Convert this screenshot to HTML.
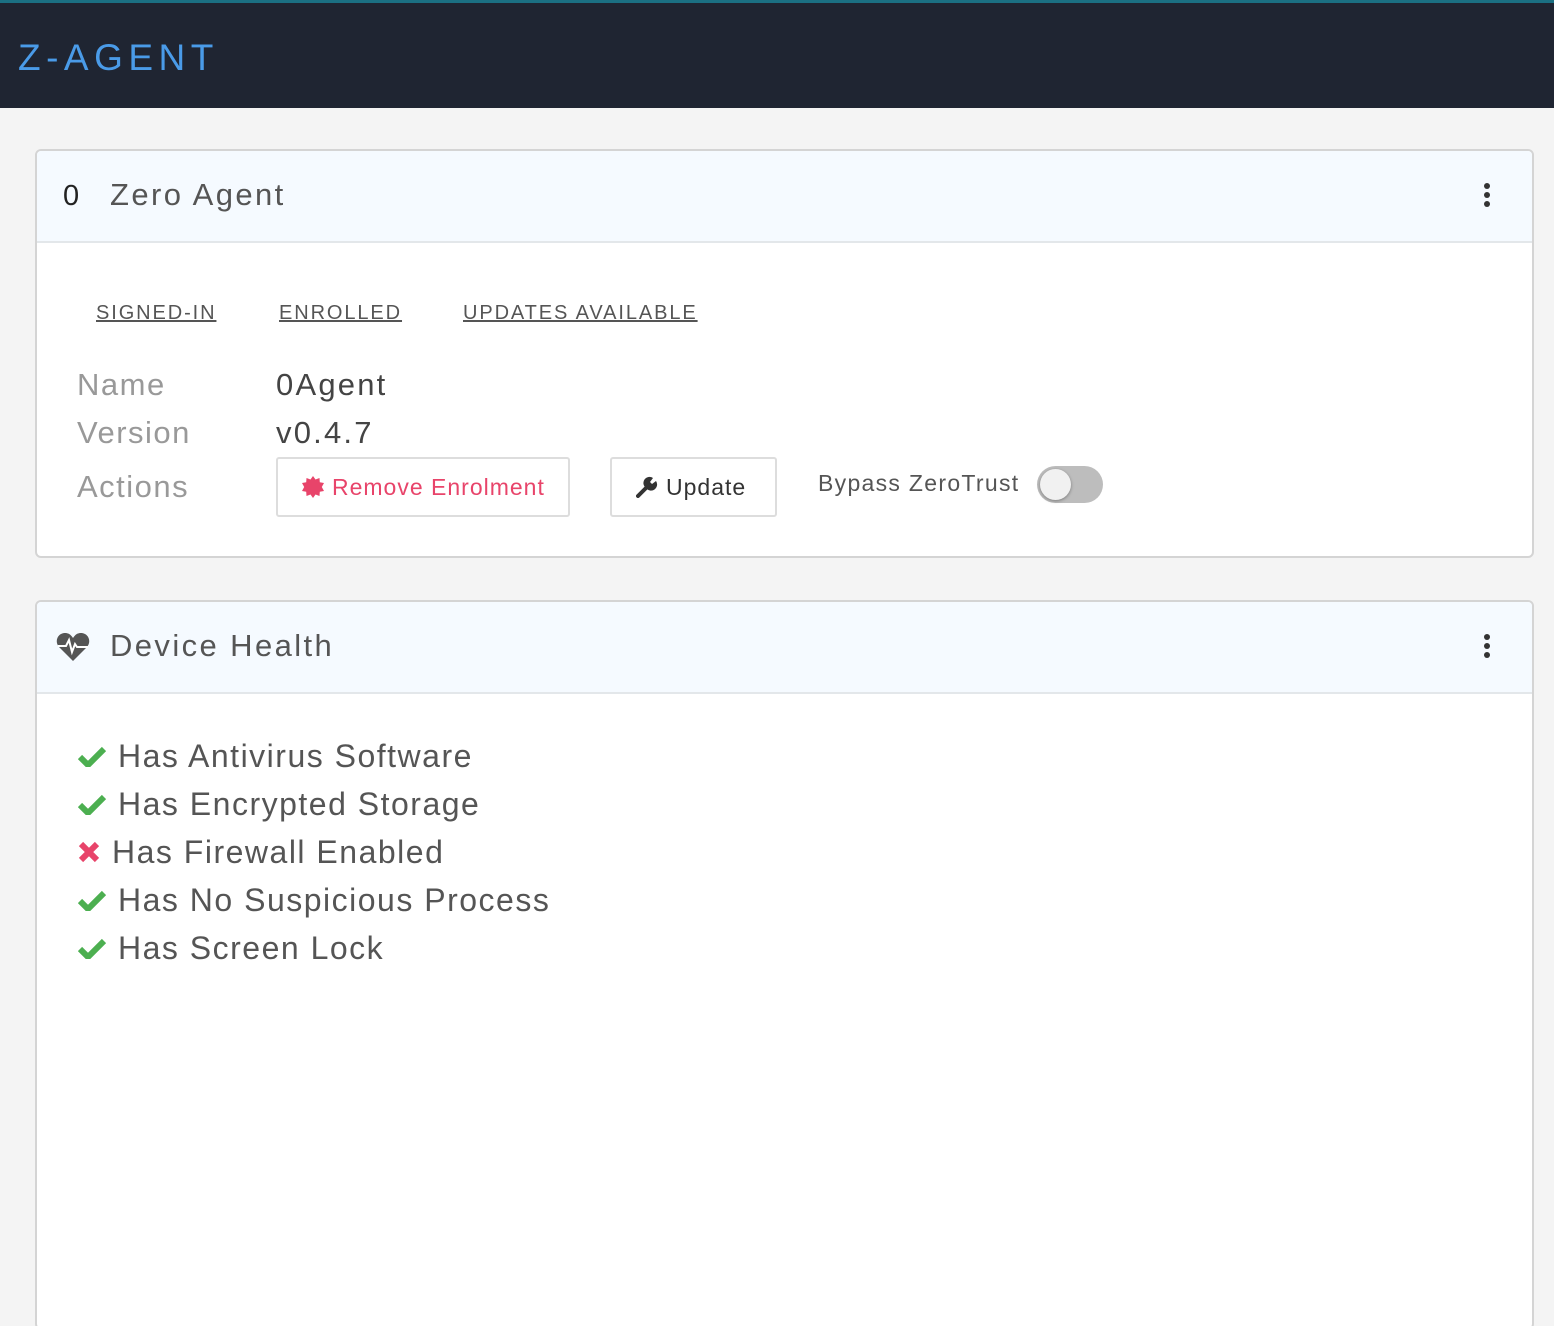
<!DOCTYPE html>
<html style="width:1554px;height:1326px;overflow:hidden"><head><style>
*{box-sizing:border-box;margin:0;padding:0}
body{width:1554px;height:1326px;background:#f4f4f4;font-family:"Liberation Sans",sans-serif;overflow:hidden;position:relative;color:#555}
.top{position:absolute;left:0;top:0;width:1554px;height:108px;background:#1f2532;border-top:3px solid #1b7083}
.logo{position:absolute;left:18px;top:34px;font-size:37px;color:#4a9be8;letter-spacing:5.5px}
.card{position:absolute;left:35px;width:1499px;background:#fff;border:2px solid #d4d4d4;border-radius:6px;overflow:hidden}
.ch{height:92px;background:#f5faff;border-bottom:2px solid #e3e7ea;position:relative}
.ct{position:absolute;left:73px;top:26px;font-size:31px;color:#555;letter-spacing:2.4px}
.dots{position:absolute;right:42px;top:32px;width:6px}
.dots i{display:block;width:6px;height:6px;border-radius:3px;background:#333;margin-bottom:3px}
.abs{position:absolute}
.tab{font-size:20px;color:#555;text-decoration:underline;letter-spacing:1.9px;top:302px}
.lbl{font-size:31px;color:#999;left:77px;letter-spacing:1.5px}
.val{font-size:31px;color:#444;left:276px;letter-spacing:2.2px}
.btn{position:absolute;top:457px;height:60px;border:2px solid #ddd;border-radius:3px;background:#fff;font-size:23px;line-height:56px;padding-left:24px;letter-spacing:1px}
.hl{position:absolute;left:78px;font-size:32px;color:#555;letter-spacing:1.5px}
.hl svg{vertical-align:middle;margin-right:12px;position:relative;top:-3px}
</style></head><body>
<div class="top"><div class="logo">Z-AGENT</div></div>

<div class="card" style="top:149px;height:409px">
 <div class="ch"><div class="abs" style="left:26px;top:29px;font-size:29px;color:#222">0</div><div class="ct">Zero Agent</div><div class="dots"><i></i><i></i><i></i></div></div>
</div>
<div class="abs tab" style="left:96px">SIGNED-IN</div>
<div class="abs tab" style="left:279px">ENROLLED</div>
<div class="abs tab" style="left:463px">UPDATES AVAILABLE</div>
<div class="abs lbl" style="top:367px">Name</div>
<div class="abs val" style="top:367px">0Agent</div>
<div class="abs lbl" style="top:415px">Version</div>
<div class="abs val" style="top:415px">v0.4.7</div>
<div class="abs lbl" style="top:469px">Actions</div>
<div class="btn" style="left:276px;width:294px;color:#e8446a"><svg width="22" height="22" viewBox="0 0 22 22" style="vertical-align:middle;margin-right:8px;position:relative;top:-2px"><polygon fill="#e8446a" points="11,0 13.5,3.5 17.5,2 17.8,6.2 22,7 19.8,11 22,15 17.8,15.8 17.5,20 13.5,18.5 11,22 8.5,18.5 4.5,20 4.2,15.8 0,15 2.2,11 0,7 4.2,6.2 4.5,2 8.5,3.5"/></svg>Remove Enrolment</div>
<div class="btn" style="left:610px;width:167px;color:#333"><svg width="22" height="22" viewBox="0 0 22 22" style="vertical-align:middle;margin-right:8px;position:relative;top:-2px"><path d="M2 20 L11 11" stroke="#333" stroke-width="4" stroke-linecap="round"/><path d="M10 12 A6 6 0 0 1 17 2 L14 6 L16 8 L20 5 A6 6 0 0 1 10 12Z" fill="#333"/></svg>Update</div>
<div class="abs" style="left:818px;top:470px;font-size:23px;color:#555;letter-spacing:1.3px">Bypass ZeroTrust</div>
<div class="abs" style="left:1037px;top:466px;width:66px;height:37px;border-radius:19px;background:#bdbdbd"></div>
<div class="abs" style="left:1040px;top:469px;width:31px;height:31px;border-radius:16px;background:#f1f1f1;box-shadow:0 1px 3px rgba(0,0,0,.35)"></div>

<div class="card" style="top:600px;height:730px">
 <div class="ch"><svg class="abs" style="left:19px;top:30px" width="34" height="30" viewBox="0 0 34 30"><path d="M17 29 L3 15 C-2 9 2 1 9 1 C13 1 15 3 17 6 C19 3 21 1 25 1 C32 1 36 9 31 15Z" fill="#555"/><path d="M2 14 H10 L13 8 L16 20 L19 12 L21 15 H32" stroke="#fff" stroke-width="2" fill="none"/></svg><div class="ct">Device Health</div><div class="dots"><i></i><i></i><i></i></div></div>
</div>
<div class="hl" style="top:738px"><svg width="28" height="22" viewBox="0 0 28 22"><path d="M2 12 L10 20 L26 4" stroke="#4caf50" stroke-width="6" fill="none"/></svg>Has Antivirus Software</div>
<div class="hl" style="top:786px"><svg width="28" height="22" viewBox="0 0 28 22"><path d="M2 12 L10 20 L26 4" stroke="#4caf50" stroke-width="6" fill="none"/></svg>Has Encrypted Storage</div>
<div class="hl" style="top:834px"><svg width="22" height="22" viewBox="0 0 22 22"><path d="M3 3 L19 19 M19 3 L3 19" stroke="#e8446a" stroke-width="6"/></svg>Has Firewall Enabled</div>
<div class="hl" style="top:882px"><svg width="28" height="22" viewBox="0 0 28 22"><path d="M2 12 L10 20 L26 4" stroke="#4caf50" stroke-width="6" fill="none"/></svg>Has No Suspicious Process</div>
<div class="hl" style="top:930px"><svg width="28" height="22" viewBox="0 0 28 22"><path d="M2 12 L10 20 L26 4" stroke="#4caf50" stroke-width="6" fill="none"/></svg>Has Screen Lock</div>
</body></html>
